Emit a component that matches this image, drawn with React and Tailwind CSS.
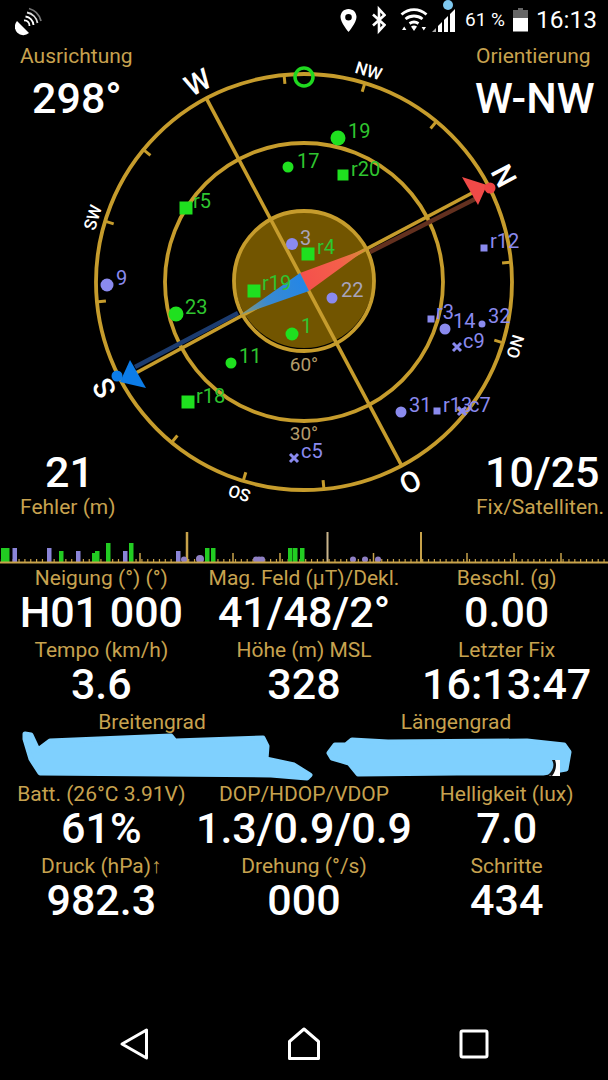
import React from 'react';

const GOLD = '#c69c2c';
const GREEN = '#1fe01f';
const GREEN_TEXT = '#2fc52f';
const PURPLE = '#8a8aee';
const CX = 304;
const CY = 282;

const polar = (deg, r) => {
    const a = (deg * Math.PI) / 180;
    return [CX + r * Math.sin(a), CY - r * Math.cos(a)];
};

const HEADING = 62;

const sats = [
    { n: '19', kind: 'dot', x: 338, y: 138, s: 7.5, lx: 348, ly: 138, c: 'g' },
    { n: '17', kind: 'dot', x: 288, y: 167, s: 5.5, lx: 297, ly: 168, c: 'g' },
    { n: 'r20', kind: 'sq', x: 343, y: 175, s: 11, lx: 351, ly: 176, c: 'g' },
    { n: 'r5', kind: 'sq', x: 186, y: 208, s: 13, lx: 193, ly: 208, c: 'g' },
    { n: '3', kind: 'dot', x: 292, y: 244, s: 6, lx: 300, ly: 245, c: 'p', dim: true },
    { n: 'r4', kind: 'sq', x: 308, y: 254, s: 13, lx: 317, ly: 254, c: 'g' },
    { n: 'r19', kind: 'sq', x: 254, y: 291, s: 13, lx: 262, ly: 290, c: 'g' },
    { n: '22', kind: 'dot', x: 332, y: 298, s: 5.5, lx: 341, ly: 297, c: 'p', dim: true },
    { n: '1', kind: 'dot', x: 292, y: 334, s: 6.5, lx: 301, ly: 333, c: 'g' },
    { n: '23', kind: 'dot', x: 176, y: 314, s: 7.5, lx: 185, ly: 314, c: 'g' },
    { n: '9', kind: 'dot', x: 107, y: 285, s: 6.5, lx: 116, ly: 285, c: 'p' },
    { n: '11', kind: 'dot', x: 231, y: 363, s: 5.5, lx: 239, ly: 363, c: 'g' },
    { n: 'r18', kind: 'sq', x: 188, y: 402, s: 13, lx: 196, ly: 403, c: 'g' },
    { n: 'c5', kind: 'x', x: 294, y: 458, s: 4, lx: 301, ly: 458, c: 'p' },
    { n: 'r12', kind: 'sq', x: 484, y: 248, s: 7, lx: 490, ly: 248, c: 'p' },
    { n: 'r3', kind: 'sq', x: 431, y: 319, s: 7, lx: 436, ly: 319, c: 'p' },
    { n: '14', kind: 'dot', x: 445, y: 329, s: 5.5, lx: 453, ly: 328, c: 'p' },
    { n: '32', kind: 'dot', x: 482, y: 324, s: 3.5, lx: 488, ly: 323, c: 'p' },
    { n: 'c9', kind: 'x', x: 457, y: 347, s: 4, lx: 463, ly: 348, c: 'p' },
    { n: '31', kind: 'dot', x: 401, y: 412, s: 5.5, lx: 409, ly: 412, c: 'p' },
    { n: 'r13', kind: 'sq', x: 437, y: 411, s: 7, lx: 443, ly: 412, c: 'p' },
    { n: 'c7', kind: 'x', x: 462, y: 411, s: 4, lx: 469, ly: 412, c: 'p' },
];

const Sat = ({ sat }) => {
    const fill = sat.c === 'g' ? GREEN : PURPLE;
    const text = sat.c === 'g' ? GREEN_TEXT : sat.dim ? '#a8a4bc' : PURPLE;
    return (
        <g>
            {sat.kind === 'dot' && <circle cx={sat.x} cy={sat.y} r={sat.s} fill={fill} />}
            {sat.kind === 'sq' && <rect x={sat.x - sat.s / 2} y={sat.y - sat.s / 2} width={sat.s} height={sat.s} fill={fill} />}
            {sat.kind === 'x' && (
                <path d={`M${sat.x - sat.s} ${sat.y - sat.s}L${sat.x + sat.s} ${sat.y + sat.s}M${sat.x + sat.s} ${sat.y - sat.s}L${sat.x - sat.s} ${sat.y + sat.s}`} stroke={fill} strokeWidth="3" />
            )}
            <text x={sat.lx} y={sat.ly} fontSize="20" fill={text}>{sat.n}</text>
        </g>
    );
};

const Letter = ({ deg, r, size, weight, children }) => {
    const [x, y] = polar(deg, r);
    return (
        <text
            x={x}
            y={y}
            fontSize={size}
            fontWeight={weight}
            fill="#fff"
            textAnchor="middle"
            dominantBaseline="central"
            transform={`rotate(${deg} ${x} ${y})`}
        >
            {children}
        </text>
    );
};

const Compass = () => {
    const ticks = [];
    for (let i = 0; i < 16; i++) {
        if (i % 4 === 0) continue;
        const deg = HEADING + i * 22.5;
        const [x1, y1] = polar(deg, 199);
        const [x2, y2] = polar(deg, 209);
        ticks.push(<line key={i} x1={x1} y1={y1} x2={x2} y2={y2} stroke={GOLD} strokeWidth="3" />);
    }
    const [wx, wy] = polar(HEADING - 90, 208);
    const [ox, oy] = polar(HEADING + 90, 208);

    return (
        <svg className="absolute inset-0 w-full h-full" viewBox="0 40 608 485">
            <defs>
                <linearGradient id="redWedge" gradientUnits="userSpaceOnUse" x1="304" y1="282" x2="372" y2="246">
                    <stop offset="0" stopColor="#f4504c" />
                    <stop offset="0.55" stopColor="#f4604a" />
                    <stop offset="1" stopColor="#cf9a34" />
                </linearGradient>
                <linearGradient id="blueWedge" gradientUnits="userSpaceOnUse" x1="304" y1="282" x2="236" y2="318">
                    <stop offset="0" stopColor="#2486e6" />
                    <stop offset="0.55" stopColor="#3a8ad0" />
                    <stop offset="1" stopColor="#9a9c60" />
                </linearGradient>
            </defs>

            <circle cx="304" cy="279" r="69" fill="#725500" />
            <circle cx={CX} cy={CY} r="208" fill="none" stroke={GOLD} strokeWidth="3.8" />
            <circle cx={CX} cy={CY} r="139" fill="none" stroke={GOLD} strokeWidth="3.8" />
            <circle cx={CX} cy="281" r="70" fill="none" stroke={GOLD} strokeWidth="3.8" />
            {ticks}

            <line x1={wx} y1={wy} x2={ox} y2={oy} stroke={GOLD} strokeWidth="3.6" />

            {/* shadow lines behind the needle */}
            <line x1="370" y1="252" x2="477" y2="198" stroke="#63301f" strokeWidth="4.5" />
            <line x1="238" y1="313" x2="135" y2="367" stroke="#1c3c70" strokeWidth="4.5" />
            <line x1="304" y1="282" x2="474" y2="192" stroke={GOLD} strokeWidth="3.6" />
            <line x1="304" y1="282" x2="134" y2="374" stroke={GOLD} strokeWidth="3.6" />

            <polygon points="300,273 368,248 309,291" fill="url(#redWedge)" />
            <polygon points="300,273 240,315 309,291" fill="url(#blueWedge)" />

            <polygon points="462,177 478,205 487,185" fill="#f04a48" />
            <circle cx="490" cy="188" r="5.5" fill="#ee4444" />
            <polygon points="130,360 146,388 120,382" fill="#0c7ce8" />
            <circle cx="117" cy="376" r="5.5" fill="#0c7ce8" />

            <circle cx="304" cy="77" r="9" fill="none" stroke="#1fd81f" strokeWidth="3.5" />

            <Letter deg={HEADING - 90} r={226} size="29" weight="500">W</Letter>
            <Letter deg={HEADING} r={226} size="29" weight="500">N</Letter>
            <Letter deg={HEADING + 90} r={226} size="29" weight="500">O</Letter>
            <Letter deg={HEADING + 180} r={226} size="29" weight="500">S</Letter>
            <Letter deg={HEADING - 45} r={221} size="17" weight="500">NW</Letter>
            <Letter deg={HEADING + 45} r={221} size="17" weight="500">NO</Letter>
            <Letter deg={HEADING + 135} r={221} size="17" weight="500">SO</Letter>
            <Letter deg={HEADING - 135} r={221} size="17" weight="500">SW</Letter>

            <text x="304" y="371" fontSize="19" fill="#b39c6a" textAnchor="middle">60°</text>
            <text x="304" y="440" fontSize="19" fill="#b39c6a" textAnchor="middle">30°</text>

            {sats.map(sat => <Sat key={sat.n} sat={sat} />)}
        </svg>
    );
};

// signal strength strip under the compass
const bars = [
    [3, 548, 'g'], [7, 548, 'g'], [14.5, 548, 'p'], [49, 548, 'p'], [61, 551, 'g'], [78, 551, 'p'],
    [94, 553, 'g'], [97, 551, 'g'], [108, 543, 'g'], [125, 551, 'p'], [131, 543, 'g'], [178, 551, 'p'],
    [207, 548, 'g'], [213, 548, 'g'], [290, 548, 'g'], [295, 548, 'g'], [302, 548, 'g'],
];

const SignalStrip = () => {
    const ticks = [];
    for (let x = 1.5; x < 608; x += 5.85) ticks.push(x);
    return (
        <svg className="block w-full h-[40px]" viewBox="0 525 608 40">
            {ticks.map(x => <line key={x} x1={x} y1="559" x2={x} y2="562" stroke="#c7a24a" strokeWidth="1.2" />)}
            {[140, 233, 280, 373.5, 467, 514, 561].map(x => <line key={x} x1={x} y1="553" x2={x} y2="562" stroke="#c7a24a" strokeWidth="1.5" />)}
            <line x1="187" y1="532" x2="187" y2="562" stroke="#c7a24a" strokeWidth="2.5" />
            <line x1="327.5" y1="532" x2="327.5" y2="562" stroke="#c9b48c" strokeWidth="2" />
            <line x1="421" y1="532" x2="421" y2="562" stroke="#c7a24a" strokeWidth="2" />
            {bars.map(([x, top, c]) => (
                <rect key={x} x={x - 2} y={top} width="4.5" height={562 - top} fill={c === 'g' ? '#22cc22' : '#8a84d8'} />
            ))}
            {[[184, 3], [200, 4], [256, 3], [259, 3], [262, 3], [353, 3], [365, 3], [378, 3]].map(([x, r]) => (
                <circle key={x} cx={x} cy={561 - r / 2} r={r} fill="#8f80c4" />
            ))}
            <line x1="0" y1="562.5" x2="608" y2="562.5" stroke="#c7a24a" strokeWidth="2" />
        </svg>
    );
};

const Stat = ({ label, value }) => (
    <div className="flex flex-col items-center h-[72px] pt-[1px] whitespace-nowrap">
        <span className="text-[21px] leading-[22px] text-[#c7a24f]">{label}</span>
        <span className="text-[43px] leading-[46px] font-medium text-white">{value}</span>
    </div>
);

const StatusIcons = () => (
    <div className="flex items-center ml-auto pr-[11px] text-white">
        <svg width="17" height="40" viewBox="0 0 17 40">
            <path fillRule="evenodd" d="M8.5 9C3.8 9 0.5 12.6 0.5 17c0 5.5 8 15 8 15s8-9.5 8-15c0-4.4-3.3-8-8-8zm0 5a3.3 3.3 0 1 1 0 6.6a3.3 3.3 0 0 1 0-6.6z" fill="#fff" />
        </svg>
        <svg className="ml-[15px]" width="14" height="40" viewBox="0 0 14 40">
            <path d="M1 14.5L12.5 25L7 31V9l5.5 6L1 25.5" fill="none" stroke="#fff" strokeWidth="2.6" />
        </svg>
        <svg className="ml-[14px]" width="28" height="40" viewBox="0 0 28 40">
            <path d="M1.5 14.5C9 8 19 8 26.5 14.5M5.5 19C10.5 15 17.5 15 22.5 19M9.5 23.5C12.5 21.5 15.5 21.5 18.5 23.5" fill="none" stroke="#fff" strokeWidth="2.8" />
            <path d="M11 26.5C13 25.3 15 25.3 17 26.5L14 31z M2 30l2.2-3.5L6.4 30z M21.6 27h4.4L23.8 30.5z" fill="#fff" />
        </svg>
        <svg className="ml-[4px]" width="24" height="40" viewBox="0 0 24 40">
            <path d="M0 32l4-4v4z" fill="#aaa" />
            <path d="M6 32v-6l4-4v10zM12 32V20l4-4v16zM18 32V14l5-5v23z" fill="#fff" />
            <circle cx="16" cy="5" r="5" fill="#7fc8f0" />
        </svg>
        <span className="w-[41px] ml-[9px] text-[19px] leading-[42px] text-white whitespace-nowrap">61 %</span>
        <svg className="ml-[7px]" width="15" height="40" viewBox="0 0 15 40">
            <path d="M5 8h5v2h5v8H0v-8h5z" fill="#666" />
            <rect x="0" y="18" width="15" height="13.5" fill="#fff" />
        </svg>
        <span className="ml-[8px] text-[24.5px] leading-[42px] text-white">16:13</span>
    </div>
);

const App = () => {
    return (
        <div className="flex flex-col w-[608px] h-[1080px] bg-black overflow-hidden font-['Roboto',sans-serif]">
            <header className="flex items-center h-[40px]">
                <svg className="ml-[15px]" width="30" height="40" viewBox="0 0 30 40">
                    <path d="M2 21L14 33A8.5 8.5 0 0 1 2 21z" fill="#fff" />
                    <path d="M9 20.5A5 5 0 0 1 14.5 26" fill="none" stroke="#fff" strokeWidth="1.8" />
                    <path d="M10.5 16.5A9 9 0 0 1 18.5 25" fill="none" stroke="#fff" strokeWidth="1.8" />
                    <path d="M12 12.5A13 13 0 0 1 22.5 23" fill="none" stroke="#ddd" strokeWidth="1.8" />
                    <path d="M14 8.5A17 17 0 0 1 26 21" fill="none" stroke="#777" strokeWidth="1.8" />
                </svg>
                <StatusIcons />
            </header>

            <section className="relative flex flex-col justify-between h-[485px]">
                <Compass />
                <div className="relative flex justify-between pt-[4px]">
                    <div className="flex flex-col">
                        <span className="ml-[20px] text-[21px] leading-[24px] text-[#c7a24f]">Ausrichtung</span>
                        <span className="ml-[32px] mt-[7px] text-[43px] leading-[46px] font-medium text-white">298°</span>
                    </div>
                    <div className="flex flex-col w-[132px]">
                        <span className="text-[21px] leading-[24px] text-[#c7a24f]">Orientierung</span>
                        <span className="-ml-[1px] mt-[7px] text-[43px] leading-[46px] font-medium text-white">W-NW</span>
                    </div>
                </div>
                <div className="relative flex justify-between pb-[6px]">
                    <div className="flex flex-col">
                        <span className="ml-[45px] text-[43px] leading-[46px] font-medium text-white">21</span>
                        <span className="ml-[20px] text-[21px] leading-[24px] text-[#c7a24f]">Fehler (m)</span>
                    </div>
                    <div className="flex flex-col w-[132px]">
                        <span className="ml-[9px] text-[43px] leading-[46px] font-medium text-white">10/25</span>
                        <span className="text-[21px] leading-[24px] text-[#c7a24f] whitespace-nowrap">Fix/Satelliten.</span>
                    </div>
                </div>
            </section>

            <SignalStrip />

            <main className="pt-[1px]">
                <div className="grid grid-cols-3">
                    <Stat label="Neigung (°) (°)" value="H01 000" />
                    <Stat label="Mag. Feld (µT)/Dekl." value="41/48/2°" />
                    <Stat label="Beschl. (g)" value="0.00" />
                    <Stat label="Tempo (km/h)" value="3.6" />
                    <Stat label="Höhe (m) MSL" value="328" />
                    <Stat label="Letzter Fix" value="16:13:47" />
                </div>

                <div className="h-[72px]">
                    <div className="grid grid-cols-2">
                        <span className="text-center text-[21px] leading-[24px] text-[#c7a24f]">Breitengrad</span>
                        <span className="text-center text-[21px] leading-[24px] text-[#c7a24f]">Längengrad</span>
                    </div>
                    <svg className="block w-full h-[48px] overflow-visible" viewBox="0 734 608 48">
                        <path d="M25 734L31 735L38 750L50 741L171 736L175 741L263 738L267 746L266 759L294 765L310 775L307 778L271 775L40 773L31 759L25 739z" fill="#7fd0fe" stroke="#7fd0fe" strokeWidth="5" strokeLinejoin="round" />
                        <path d="M329 753L335 745L346 745L352 740L388 742L527 741L564 745L569 752L566 769L543 773L457 773L358 774L349 763L332 758z" fill="#7fd0fe" stroke="#7fd0fe" strokeWidth="5" strokeLinejoin="round" />
                        <path d="M553 760C556 765 554 772 549 776L560 776L560 760z" fill="#fff" />
                        <path d="M552 760C555 765 553 771 548 775L552 776C556 771 557 765 555 760z" fill="#111" />
                    </svg>
                </div>

                <div className="grid grid-cols-3">
                    <Stat label="Batt. (26°C 3.91V)" value="61%" />
                    <Stat label="DOP/HDOP/VDOP" value="1.3/0.9/0.9" />
                    <Stat label="Helligkeit (lux)" value="7.0" />
                    <Stat label="Druck (hPa)↑" value="982.3" />
                    <Stat label="Drehung (°/s)" value="000" />
                    <Stat label="Schritte" value="434" />
                </div>
            </main>

            <nav className="mt-auto flex justify-between items-center h-[72px] pl-[119px] pr-[119px] pb-[1px]">
                <svg width="30" height="34" viewBox="0 0 30 34">
                    <path d="M3 17L27.5 3V31z" fill="none" stroke="#fff" strokeWidth="3" strokeLinejoin="round" />
                </svg>
                <svg width="34" height="34" viewBox="0 0 34 34">
                    <path d="M2.5 14.5L17 2L31.5 14.5V31.5H2.5z" fill="none" stroke="#fff" strokeWidth="3" strokeLinejoin="round" />
                </svg>
                <svg width="30" height="30" viewBox="0 0 30 30">
                    <rect x="2" y="2" width="26" height="26" rx="1.5" fill="none" stroke="#fff" strokeWidth="3" />
                </svg>
            </nav>
        </div>
    );
};

export default App;
